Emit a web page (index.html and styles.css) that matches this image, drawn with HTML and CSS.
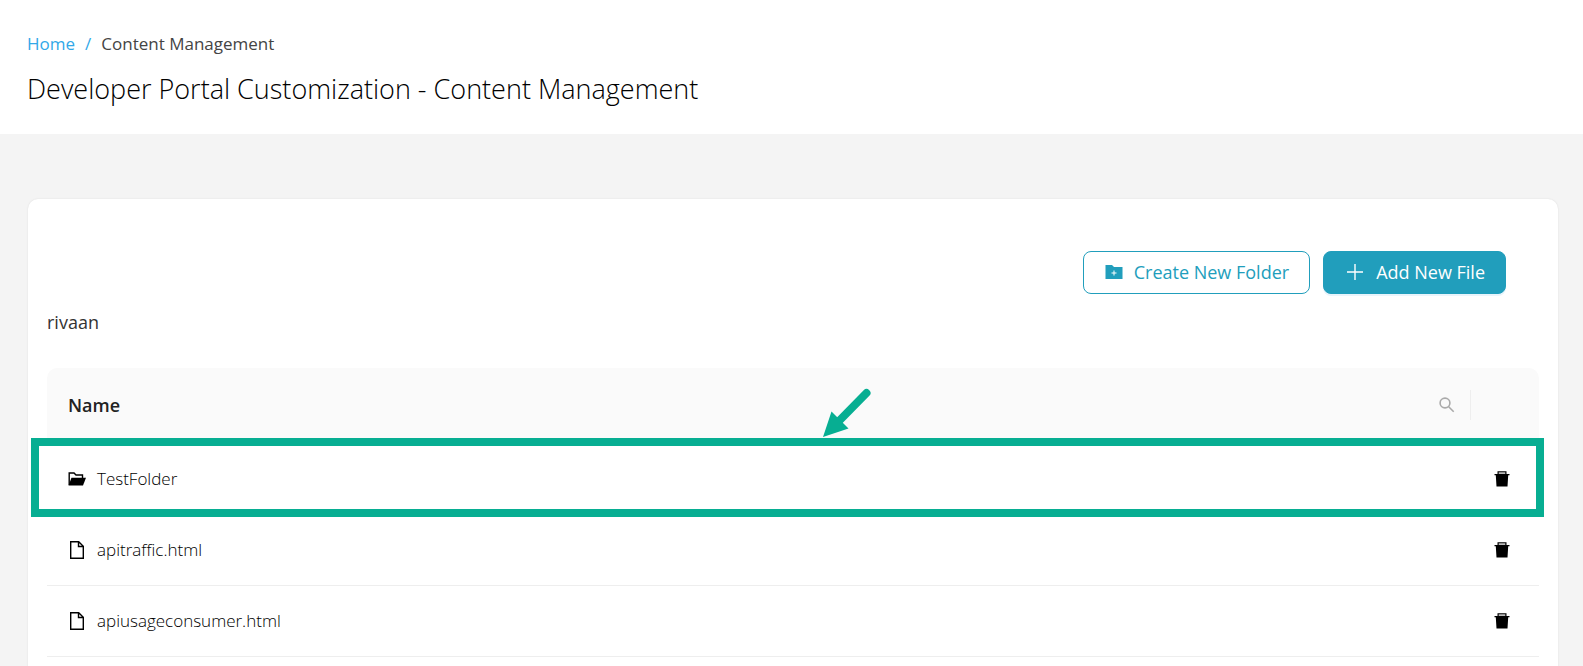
FILE: index.html
```html
<!DOCTYPE html>
<html lang="en">
<head>
<meta charset="utf-8">
<title>Content Management</title>
<meta name="viewport" content="width=device-width, initial-scale=1">
<link rel="stylesheet" href="styles.css">
</head>
<body>
<svg class="sprite" aria-hidden="true">
  <symbol id="icon-trash" viewBox="0 0 16 16">
    <path class="trash-lid" d="M4 1h8v2.500H4z"/>
    <path d="M3.500 3V.2h9V3H15.500v1.200H14.200L13.500 15.500H2.500L1.800 4.200H.5V3z M4.700 1.200V3h6.600V1.200z" fill-rule="evenodd"/>
  </symbol>
  <symbol id="icon-file" viewBox="0 0 16 20">
    <path d="M1.700 1.700h8l4.600 4.600v12H1.700z M9.500 2v4.500h4.500" fill="none" stroke="currentColor" stroke-width="1.400"/>
  </symbol>
</svg>
<header class="page-header">
  <nav class="breadcrumb" aria-label="Breadcrumb">
    <a class="breadcrumb-link" href="#">Home</a>
    <span class="breadcrumb-separator">/</span>
    <span>Content Management</span>
  </nav>
  <h1 class="page-title">Developer Portal Customization - Content Management</h1>
</header>
<main class="content">
  <section class="card">
    <div class="actions">
      <button class="button" type="button">
        <svg class="icon-folder-plus" viewBox="0 0 18 16" aria-hidden="true"><path fill="currentColor" fill-rule="evenodd" d="M.5 1h6.500l2 2h8.500v12H.5z M8.500 6.500v2h-2v1h2v2h1v-2h2v-1h-2v-2z"/></svg>
        Create New Folder
      </button>
      <button class="button button-primary" type="button">
        <svg class="icon-plus" viewBox="0 0 16 16" aria-hidden="true"><path d="M8 0v16M0 8h16" stroke="currentColor" stroke-width="1.400"/></svg>
        Add New File
      </button>
    </div>
    <p class="path">rivaan</p>
    <table class="files">
      <thead>
        <tr>
          <th class="name-head" scope="col">
            <div class="head-cell">
              <span>Name</span>
              <button class="icon-button search" type="button" aria-label="Search by name"><svg class="icon-search" viewBox="0 0 16 16" aria-hidden="true"><circle cx="6" cy="6" r="4.900"/><path d="M9.700 9.700l5 5"/></svg></button>
            </div>
          </th>
          <td class="action-head"></td>
        </tr>
      </thead>
      <tbody>
        <tr class="row-marked">
          <td>
            <div class="entry"><svg class="icon-folder" viewBox="0 0 20 16" aria-hidden="true"><path d="M1.200 14V2h4.800l2 2H14.500v3" fill="none" stroke="currentColor" stroke-width="1.400"/><path d="M.5 14.500L3.500 6.800h14.500L15 14.500z" fill="currentColor"/></svg>TestFolder</div>
            <div class="marker"></div>
            <svg class="marker-arrow" viewBox="0 0 48 50" aria-hidden="true"><path d="M43.500 5L16 33" stroke="currentColor" stroke-width="8" stroke-linecap="round"/><path d="M0 49L8.500 23.500 25.500 40.500z" fill="currentColor"/></svg>
          </td>
          <td class="action-cell"><button class="icon-button" type="button" aria-label="Delete TestFolder"><svg class="icon-trash"><use href="#icon-trash"/></svg></button></td>
        </tr>
        <tr>
          <td><div class="entry"><svg class="icon-file"><use href="#icon-file"/></svg>apitraffic.html</div></td>
          <td class="action-cell"><button class="icon-button" type="button" aria-label="Delete apitraffic.html"><svg class="icon-trash"><use href="#icon-trash"/></svg></button></td>
        </tr>
        <tr>
          <td><div class="entry"><svg class="icon-file"><use href="#icon-file"/></svg>apiusageconsumer.html</div></td>
          <td class="action-cell"><button class="icon-button" type="button" aria-label="Delete apiusageconsumer.html"><svg class="icon-trash"><use href="#icon-trash"/></svg></button></td>
        </tr>
      </tbody>
    </table>
  </section>
</main>
</body>
</html>
```
FILE: styles.css
```css
* {
  box-sizing: border-box;
}

body {
  margin: 0;
  background: #f4f4f4;
  color: #333;
  font-family: "Open Sans", "Noto Sans", sans-serif;
  font-size: 18px;
  line-height: 28px;
}

.sprite {
  position: absolute;
  width: 0;
  height: 0;
}

.page-header {
  padding: 30px 27px 25px;
  background: #fff;
}

.breadcrumb {
  display: flex;
  gap: 10px;
  font-size: 17px;
  color: #444;
}

.breadcrumb-link,
.breadcrumb-separator {
  color: #31a8e8;
  text-decoration: none;
}

.page-title {
  margin: 11px 0 0;
  color: #000;
  font-size: 27px;
  font-weight: 300;
  line-height: 40px;
}

.content {
  padding: 65px 25px 0 28px;
}

.card {
  padding: 52px 19px 40px;
  background: #fff;
  border-radius: 10px;
  box-shadow: 0 0 2px rgba(0, 0, 0, 0.1);
}

.actions {
  display: flex;
  justify-content: flex-end;
  gap: 13px;
  padding-right: 33px;
}

.button {
  display: flex;
  align-items: center;
  gap: 11px;
  height: 43px;
  padding: 0 20px 2px 21px;
  border: 1px solid #219ebc;
  border-radius: 8px;
  background: #fff;
  color: #219ebc;
  font: inherit;
}

.button-primary {
  padding-left: 23px;
  gap: 13px;
  background: #219ebc;
  color: #fff;
  box-shadow: 0 2px 0 #e8f4fb;
}

.icon-folder-plus {
  width: 18px;
  height: 16px;
}

.icon-plus {
  width: 16px;
  height: 16px;
}

.path {
  margin: 14px 0 32px;
}

.files {
  width: 100%;
  border-collapse: separate;
  border-spacing: 0;
  color: #222;
}

.files th,
.files td {
  height: 71px;
  padding: 0 21px;
  border-bottom: 1px solid #eee;
  text-align: left;
  vertical-align: middle;
}

.files .name-head,
.files .action-head {
  height: 75px;
  background: #fafafa;
}

.files .name-head {
  padding: 0 0 0 21px;
  border-top-left-radius: 10px;
  font-weight: 600;
}

.files .action-head {
  width: 68px;
  border-top-right-radius: 10px;
}

.head-cell {
  display: flex;
  align-items: center;
  justify-content: space-between;
  height: 30px;
  padding-right: 15px;
  border-right: 1px solid #eee;
}

.entry {
  display: flex;
  align-items: center;
  color: #000;
  font-size: 17px;
  font-weight: 300;
}

.icon-folder {
  width: 20px;
  height: 16px;
  margin-right: 9px;
}

.icon-file {
  width: 16px;
  height: 20px;
  margin: 0 12px 0 1px;
}

.icon-button {
  display: block;
  padding: 0;
  border: 0;
  background: none;
  color: #000;
}

.files .action-cell {
  padding: 0 0 0 23px;
}

.icon-trash,
.icon-search {
  display: block;
  width: 16px;
  height: 16px;
}

.trash-lid {
  fill: #bbb;
}

.search {
  color: #aaa;
}

.icon-search {
  fill: none;
  stroke: currentColor;
  stroke-width: 1.6px;
}

.row-marked {
  position: relative;
}

.files .row-marked td {
  height: 72px;
}

.marker {
  position: absolute;
  inset: -5px -5px -2px -16px;
  border: 8px solid #07ae92;
  pointer-events: none;
}

.marker-arrow {
  position: absolute;
  top: -55px;
  left: 52%;
  width: 48px;
  height: 50px;
  color: #07ae92;
}
```
